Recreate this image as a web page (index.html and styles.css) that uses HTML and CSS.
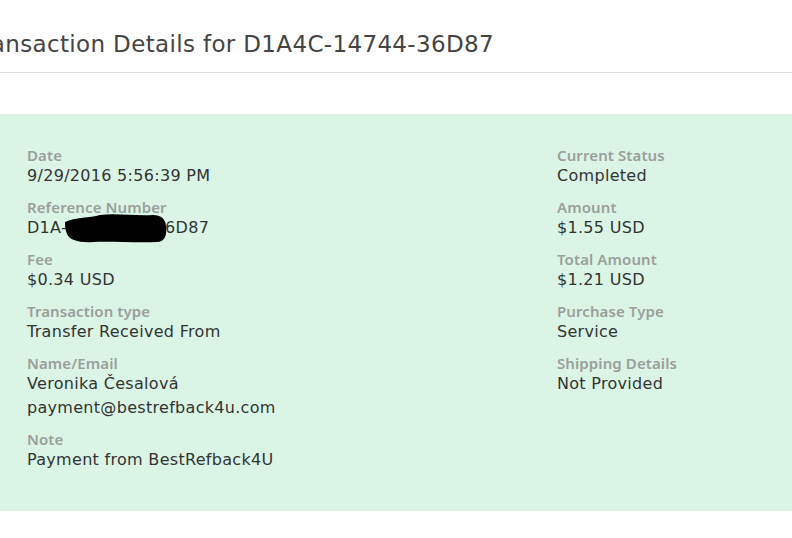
FILE: index.html
```html
<!DOCTYPE html>
<html>
<head>
    <meta charset="utf-8">
    <title>Transaction Details</title>
    <link rel="stylesheet" href="styles.css">
</head>
<body>
    <div class="header">
        <h1 class="title">Transaction Details for D1A4C-14744-36D87</h1>
    </div>

    <div class="details">
        <div class="col">
            <div class="item">
                <div class="label">Date</div>
                <div class="value">9/29/2016 5:56:39 PM</div>
            </div>
            <div class="item">
                <div class="label">Reference Number</div>
                <div class="value">D1A-<svg class="redact" width="102" height="30" viewBox="0 0 102 30"><path d="M0 9 C10 4 25 5 35 2 C50 0 70 3 88 2 C96 2 101 6 101 14 C102 22 100 29 92 29 C70 30 45 28 28 29 C15 30 4 27 2 21 C0 16 0 13 0 9 Z" fill="#000"/></svg>6D87</div>
            </div>
            <div class="item">
                <div class="label">Fee</div>
                <div class="value">$0.34 USD</div>
            </div>
            <div class="item">
                <div class="label">Transaction type</div>
                <div class="value">Transfer Received From</div>
            </div>
            <div class="item">
                <div class="label">Name/Email</div>
                <div class="value">Veronika Česalová<br>payment@bestrefback4u.com</div>
            </div>
            <div class="item">
                <div class="label">Note</div>
                <div class="value">Payment from BestRefback4U</div>
            </div>
        </div>
        <div class="col">
            <div class="item">
                <div class="label">Current Status</div>
                <div class="value">Completed</div>
            </div>
            <div class="item">
                <div class="label">Amount</div>
                <div class="value">$1.55 USD</div>
            </div>
            <div class="item">
                <div class="label">Total Amount</div>
                <div class="value">$1.21 USD</div>
            </div>
            <div class="item">
                <div class="label">Purchase Type</div>
                <div class="value">Service</div>
            </div>
            <div class="item">
                <div class="label">Shipping Details</div>
                <div class="value">Not Provided</div>
            </div>
        </div>
    </div>
</body>
</html>
```

FILE: styles.css
```css
body
{
    font-family: "DejaVu Sans", "Noto Sans", sans-serif;
    color: #333;
    background-color: #fff;
    margin: 0;
    padding: 0;
    overflow: hidden;
}
.header
{
    height: 72px;
    border-bottom: 1px solid #dedede;
    display: flex;
    align-items: center;
    white-space: nowrap;
}
.title
{
    font-size: 23px;
    font-weight: normal;
    letter-spacing: 0.35px;
    color: #444;
    margin: 0 0 0 -30px;
    padding-top: 16px;
}
.details
{
    margin-top: 41px;
    height: 397px;
    box-sizing: border-box;
    background-color: #daf5e5;
    padding: 32px 27px;
    display: grid;
    grid-template-columns: 530px 1fr;
}
.item
{
    margin-bottom: 10px;
}
.label
{
    font-family: "Noto Sans", sans-serif;
    font-size: 15px;
    font-weight: 600;
    letter-spacing: 0.1px;
    color: #9a9f9c;
    line-height: 18px;
}
.value
{
    font-size: 16px;
    letter-spacing: 0.3px;
    line-height: 24px;
    color: #333;
}
.redact
{
    vertical-align: top;
    margin: -3px -2px -7px -2px;
}
```
